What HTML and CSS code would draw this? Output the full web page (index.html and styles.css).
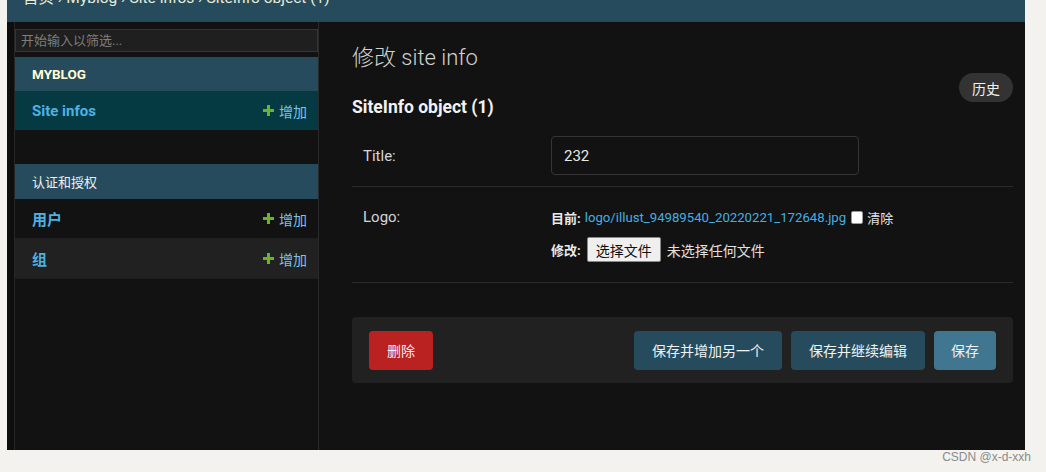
FILE: index.html
```html
<!DOCTYPE html>
<html lang="zh-CN">
<head>
<meta charset="utf-8">
<title>修改 site info</title>
<link rel="stylesheet" href="styles.css">
</head>
<body>
<div class="window">
  <div class="breadcrumbs"><div class="crumbs">首页 › Myblog › Site infos › SiteInfo object (1)</div></div>
  <div class="main">
    <div class="toggle"></div>
    <nav class="sidebar">
      <input class="filter" type="text" placeholder="开始输入以筛选...">
      <div class="module">
        <div class="caption caption-app">MYBLOG</div>
        <div class="row current">
          <span class="model">Site infos</span>
          <span class="add"><svg class="plus" viewBox="0 0 11 11" width="11" height="11"><path d="M4 0h3v4h4v3H7v4H4V7H0V4h4z" fill="#6cb32c"/></svg>增加</span>
        </div>
      </div>
      <div class="module module-auth">
        <div class="caption">认证和授权</div>
        <div class="row">
          <span class="model">用户</span>
          <span class="add"><svg class="plus" viewBox="0 0 11 11" width="11" height="11"><path d="M4 0h3v4h4v3H7v4H4V7H0V4h4z" fill="#6cb32c"/></svg>增加</span>
        </div>
        <div class="row alt">
          <span class="model">组</span>
          <span class="add"><svg class="plus" viewBox="0 0 11 11" width="11" height="11"><path d="M4 0h3v4h4v3H7v4H4V7H0V4h4z" fill="#6cb32c"/></svg>增加</span>
        </div>
      </div>
    </nav>
    <div class="content">
      <div class="head">
        <div class="titles">
          <h1>修改 site info</h1>
          <h2>SiteInfo object (1)</h2>
        </div>
        <a class="history">历史</a>
      </div>
      <div class="fieldset">
        <div class="form-row">
          <label class="label">Title:</label>
          <input class="text-input" type="text" value="232">
        </div>
        <div class="form-row form-row-file">
          <label class="label label-top">Logo:</label>
          <div class="file-upload">
            <div class="line"><b>目前:</b><a class="link">logo/illust_94989540_20220221_172648.jpg</a><span class="check"></span><span>清除</span></div>
            <div class="line line2"><b>修改:</b><span class="file-btn">选择文件</span><span class="nofile">未选择任何文件</span></div>
          </div>
        </div>
      </div>
      <div class="submit-row">
        <span class="btn btn-delete">删除</span>
        <span class="spacer"></span>
        <span class="btn btn-dark">保存并增加另一个</span>
        <span class="btn btn-dark">保存并继续编辑</span>
        <span class="btn btn-save">保存</span>
      </div>
    </div>
  </div>
</div>
<div class="watermark">CSDN @x-d-xxh</div>
</body>
</html>
```
FILE: styles.css
```css
* { box-sizing: border-box; }
html, body { margin: 0; padding: 0; }
body {
  background: #f3f2ee;
  font-family: Roboto, "Noto Sans CJK SC", sans-serif;
  color: #e0e0e0;
  width: 1046px;
  height: 472px;
  overflow: hidden;
}
.window {
  margin-left: 7px;
  width: 1018px;
  height: 450px;
  background: #121212;
  overflow: hidden;
  display: flex;
  flex-direction: column;
}
.breadcrumbs {
  height: 22px;
  background: #264b5d;
  overflow: hidden;
  flex: none;
}
.crumbs {
  margin-top: -10px;
  padding-left: 16px;
  font-size: 15.5px;
  line-height: 16px;
  color: #e8ecd8;
  white-space: nowrap;
}
.main {
  flex: 1;
  display: flex;
  min-height: 0;
}
.toggle {
  width: 8px;
  flex: none;
  background: #0e0e0e;
  border-right: 1px solid #262626;
}
.sidebar {
  width: 304px;
  flex: none;
  border-right: 1px solid #2a2a2a;
  padding-top: 7px;
}
.filter {
  display: block;
  width: 303px;
  height: 23px;
  margin: 0 0 5px 0;
  background: #1f1f1f;
  border: 1px solid #353535;
  color: #ddd;
  font-family: Roboto, "Noto Sans CJK SC", sans-serif;
  font-size: 13px;
  padding: 0 5px;
  outline: none;
}
.filter::placeholder { color: #7e7e7e; }
.caption {
  height: 35px;
  background: #264b5d;
  padding-left: 17px;
  display: flex;
  align-items: center;
  font-size: 13px;
  color: #eef0f0;
}
.caption-app {
  height: 34px;
  font-weight: 700;
  color: #ffffd6;
  font-size: 13.5px;
}
.row {
  height: 40px;
  display: flex;
  align-items: center;
  justify-content: space-between;
  padding: 0 11px 0 17px;
  border-bottom: 1px solid #1e1e1e;
}
.row.current { background: #063a43; height: 39px; border-bottom: none; }
.row.alt { background: #212121; }
.model {
  font-weight: 700;
  font-size: 15px;
  color: #4cb2e4;
}
.add {
  display: flex;
  align-items: center;
  font-size: 14px;
  color: #7cc3e8;
}
.plus { margin-right: 5px; }
.module-auth { margin-top: 34px; }
.content {
  flex: 1;
  padding: 24px 12px 0 33px;
}
.head {
  display: flex;
  justify-content: space-between;
  align-items: flex-start;
}
h1 {
  margin: 0;
  font-size: 22px;
  line-height: 24px;
  font-weight: 300;
  color: #d2d2d2;
}
h2 {
  margin: 27px 0 0 0;
  font-size: 17.5px;
  line-height: 20px;
  font-weight: 700;
  color: #f2f2f2;
}
.history {
  margin-top: 27px;
  height: 29px;
  width: 54px;
  border-radius: 15px;
  background: #333;
  color: #f0f0f0;
  font-size: 14px;
  display: flex;
  align-items: center;
  justify-content: center;
}
.fieldset { margin-top: 9px; }
.form-row {
  display: flex;
  align-items: center;
  padding: 10px 0 11px 11px;
  border-bottom: 1px solid #2a2a2a;
}
.label {
  width: 188px;
  flex: none;
  font-size: 15px;
  color: #d6d6d6;
}
.text-input {
  width: 308px;
  height: 39px;
  background: #121212;
  border: 1px solid #353535;
  border-radius: 4px;
  color: #e8e8e8;
  font-family: Roboto, "Noto Sans CJK SC", sans-serif;
  font-size: 15px;
  padding: 0 12px;
  outline: none;
}
.form-row-file {
  align-items: flex-start;
  padding: 20px 0 20px 11px;
}
.label-top { line-height: 20px; }
.file-upload { font-size: 13px; color: #e6e6e6; }
.line {
  height: 20px;
  display: flex;
  align-items: center;
  gap: 4px;
  white-space: nowrap;
}
.line b { font-weight: 700; color: #eaeaea; }
.link { color: #44aee0; font-size: 13.2px; }
.check {
  display: inline-block;
  width: 12px;
  height: 13px;
  background: #fff;
  border-radius: 2px;
  border: 1px solid #999;
  margin-left: 1px;
}
.line2 {
  margin-top: 10px;
  height: 25px;
  gap: 6px;
}
.file-btn {
  height: 25px;
  padding: 0 8px;
  background: #efefef;
  border: 1px solid #8a8a8a;
  border-radius: 2px;
  color: #111;
  font-size: 14px;
  display: flex;
  align-items: center;
}
.nofile { font-size: 14px; color: #e0e0e0; }
.submit-row {
  margin-top: 34px;
  height: 66px;
  background: #212121;
  border-radius: 4px;
  display: flex;
  align-items: center;
  padding: 0 17px;
  gap: 9px;
}
.spacer { flex: 1; }
.btn {
  height: 39px;
  padding: 0 18px;
  border-radius: 4px;
  font-size: 14px;
  color: #f2f2f2;
  display: flex;
  align-items: center;
}
.btn-delete { background: #ba2121; padding: 0 18px; }
.btn-dark { background: #264b5d; }
.btn-save { background: #417690; padding: 0 17px; }
.watermark {
  text-align: right;
  padding-right: 15px;
  font-family: "Liberation Sans", Arial, sans-serif;
  font-size: 12px;
  line-height: 14px;
  color: #8c8c8c;
}
```
